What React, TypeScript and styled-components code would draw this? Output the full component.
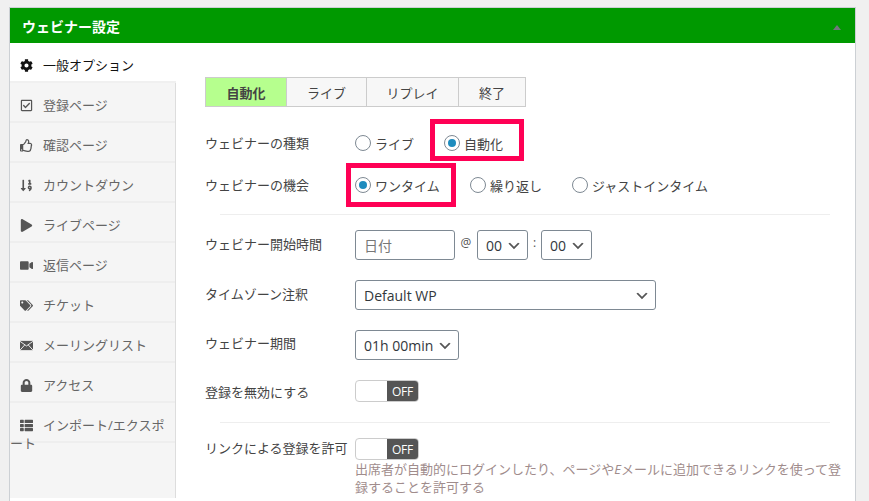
import React from 'react';
import styled, { createGlobalStyle } from 'styled-components';
import {
  FaCog,
  FaLock,
  FaPlay,
  FaRegCheckSquare,
  FaRegThumbsUp,
  FaSortNumericDown,
  FaTags,
  FaThList,
  FaVideo,
} from 'react-icons/fa';

const GlobalStyle = createGlobalStyle`
  html, body {
    margin: 0;
    height: 100%;
    overflow: hidden;
    background: #f0f0f0;
  }
  body {
    font-family: "Open Sans", "Noto Sans CJK JP", sans-serif;
    font-size: 13px;
    color: #444;
  }
`;

const Page = styled.div`
  padding: 7px 13px 0 9px;
  height: 501px;
  box-sizing: border-box;
  overflow: hidden;
`;

const Panel = styled.div`
  border: 1px solid #ccd0d4;
  background: #fff;
  height: 600px;
`;

const Header = styled.div`
  height: 35px;
  background: #009900;
  display: flex;
  align-items: center;
  justify-content: space-between;
  padding: 0 14px 0 12px;
`;

const Title = styled.h2`
  margin: 0;
  font-size: 14px;
  font-weight: 700;
  color: #fff;
`;

const CollapseArrow = styled.span`
  width: 0;
  height: 0;
  margin-top: 4px;
  border-left: 4px solid transparent;
  border-right: 4px solid transparent;
  border-bottom: 5px solid #72777c;
`;

const Body = styled.div`
  display: flex;
  align-items: flex-start;
`;

const Sidebar = styled.ul`
  list-style: none;
  box-sizing: border-box;
  margin: 0;
  padding: 0;
  width: 166px;
  height: 455px;
  flex: none;
  background: #f5f5f5;
  border-right: 1px solid #ddd;
`;

const SideItem = styled.li<{ $active?: boolean }>`
  box-sizing: border-box;
  height: 40px;
  padding: 13px 8px 0 0;
  line-height: 18px;
  border-bottom: 2px solid ${({ $active }) => ($active ? '#f0f0f0' : '#eee')};
  color: ${({ $active }) => ($active ? '#111' : '#666')};
  background: ${({ $active }) => ($active ? '#fff' : 'transparent')};
  margin-right: ${({ $active }) => ($active ? '-1px' : '0')};

  svg {
    width: 13px;
    height: 13px;
    margin: 0 10px;
    vertical-align: -2px;
    color: ${({ $active }) => ($active ? '#111' : '#555')};
  }
`;

const Main = styled.div`
  flex: 1;
  min-width: 0;
  padding: 34px 25px 0 29px;
`;

const Tabs = styled.div`
  display: flex;
  width: max-content;
  height: 30px;
  box-sizing: border-box;
  border: 1px solid #ccc;
  margin-bottom: 15px;
`;

const Tab = styled.div<{ $active?: boolean; $width: number }>`
  box-sizing: border-box;
  width: ${({ $width }) => $width}px;
  display: flex;
  align-items: center;
  justify-content: center;
  background: ${({ $active }) => ($active ? '#b6ff8e' : '#f7f7f7')};
  color: #444;
  font-weight: ${({ $active }) => ($active ? 600 : 400)};
  & + & {
    border-left: 1px solid #ccc;
  }
`;

const Row = styled.div<{ $height: number; $gap?: number }>`
  display: flex;
  align-items: center;
  height: ${({ $height }) => $height}px;
  margin-bottom: ${({ $gap }) => $gap ?? 0}px;
`;

const Label = styled.div<{ $lift?: number }>`
  width: 150px;
  flex: none;
  color: #444;
  padding-bottom: ${({ $lift }) => $lift ?? 0}px;
`;

const RadioGroup = styled.div`
  display: flex;
  align-items: center;
`;

const RadioItem = styled.label<{ $width: number }>`
  position: relative;
  display: flex;
  align-items: center;
  gap: 4px;
  width: ${({ $width }) => $width}px;
  color: #444;
`;

const RadioDot = styled.span<{ $checked?: boolean }>`
  box-sizing: border-box;
  width: 16px;
  height: 16px;
  flex: none;
  border-radius: 50%;
  border: 1px solid #7e8993;
  background: #fff;
  display: flex;
  align-items: center;
  justify-content: center;

  &::before {
    content: '';
    display: ${({ $checked }) => ($checked ? 'block' : 'none')};
    width: 8px;
    height: 8px;
    border-radius: 50%;
    background: #1e8cbe;
  }
`;

const Callout = styled.span<{ $left: number; $top: number; $width: number; $height: number }>`
  position: absolute;
  left: ${({ $left }) => $left}px;
  top: ${({ $top }) => $top}px;
  width: ${({ $width }) => $width}px;
  height: ${({ $height }) => $height}px;
  box-sizing: border-box;
  border: 5px solid #ff0055;
  pointer-events: none;
`;

const Divider = styled.div<{ $top: number; $bottom: number }>`
  height: 1px;
  background: #eee;
  margin: ${({ $top }) => $top}px 0 ${({ $bottom }) => $bottom}px 15px;
`;

const chevron =
  "url(\"data:image/svg+xml,%3Csvg xmlns='http://www.w3.org/2000/svg' width='20' height='20'%3E%3Cpath d='M5 6l5 5 5-5 2 1-7 7-7-7z' fill='%23555'/%3E%3C/svg%3E\")";

const Select = styled.div<{ $width: number }>`
  box-sizing: border-box;
  width: ${({ $width }) => $width}px;
  height: 30px;
  padding-left: 8px;
  display: flex;
  align-items: center;
  border: 1px solid #7e8993;
  border-radius: 3px;
  background: #fff ${chevron} no-repeat right 5px top 55%;
  background-size: 16px 16px;
  font-size: 14px;
  color: #32373c;
`;

const DateInput = styled.input`
  box-sizing: border-box;
  width: 100px;
  height: 30px;
  padding: 0 8px;
  border: 1px solid #7e8993;
  border-radius: 3px;
  font: inherit;
  font-size: 14px;
  color: #32373c;
  outline: none;

  &::placeholder {
    color: #777;
    opacity: 1;
  }
`;

const TimeSep = styled.span<{ $width: number }>`
  width: ${({ $width }) => $width}px;
  text-align: center;
  font-size: 12px;
  line-height: 1;
  margin-top: -4px;
  color: #555;
`;

const Toggle = styled.div`
  box-sizing: border-box;
  width: 64px;
  height: 22px;
  border: 1px solid #ccc;
  border-radius: 4px;
  overflow: hidden;
  display: flex;
  justify-content: flex-end;
  background: #fff;
`;

const ToggleOff = styled.span`
  width: 31px;
  background: #555;
  color: #fff;
  font-size: 12px;
  font-weight: 400;
  letter-spacing: -0.3px;
  display: flex;
  align-items: center;
  justify-content: center;
`;

const HelpRow = styled.div`
  display: flex;
  align-items: flex-start;
  height: 22px;
`;

const Help = styled.p`
  margin: 0 0 0 150px;
  font-size: 13px;
  line-height: 18px;
  color: #a08c8c;
  width: 492px;
`;

// dashicons-style envelope, the package one has no crossed flaps
const MailIcon = () => (
  <svg viewBox="0 0 14 14" aria-hidden="true">
    <path d="M0 2h14v10H0z" fill="currentColor" />
    <path d="M0 2.5l7 5 7-5M0 12l5-5.5M14 12L9 6.5" stroke="#f5f5f5" strokeWidth="1" fill="none" />
  </svg>
);

const sideItems: { icon: React.ReactNode; label: string; active?: boolean }[] = [
  { icon: <FaCog />, label: '一般オプション', active: true },
  { icon: <FaRegCheckSquare />, label: '登録ページ' },
  { icon: <FaRegThumbsUp />, label: '確認ページ' },
  { icon: <FaSortNumericDown />, label: 'カウントダウン' },
  { icon: <FaPlay />, label: 'ライブページ' },
  { icon: <FaVideo />, label: '返信ページ' },
  { icon: <FaTags />, label: 'チケット' },
  { icon: <MailIcon />, label: 'メーリングリスト' },
  { icon: <FaLock />, label: 'アクセス' },
  { icon: <FaThList />, label: 'インポート/エクスポート' },
];

const App: React.FC = () => (
  <Page>
    <GlobalStyle />
    <Panel>
      <Header>
        <Title>ウェビナー設定</Title>
        <CollapseArrow />
      </Header>
      <Body>
        <Sidebar>
          {sideItems.map((item) => (
            <SideItem $active={item.active} key={item.label}>
              {item.icon}
              {item.label}
            </SideItem>
          ))}
        </Sidebar>
        <Main>
          <Tabs>
            <Tab $active $width={80}>自動化</Tab>
            <Tab $width={80}>ライブ</Tab>
            <Tab $width={92}>リプレイ</Tab>
            <Tab $width={67}>終了</Tab>
          </Tabs>

          <Row $height={42}>
            <Label $lift={2}>ウェビナーの種類</Label>
            <RadioGroup>
              <RadioItem $width={89}>
                <RadioDot />
                ライブ
              </RadioItem>
              <RadioItem $width={60}>
                <RadioDot $checked />
                自動化
                <Callout $left={-14} $top={-15} $width={94} $height={42} />
              </RadioItem>
            </RadioGroup>
          </Row>
          <Row $height={42}>
            <Label $lift={2}>ウェビナーの機会</Label>
            <RadioGroup>
              <RadioItem $width={115}>
                <RadioDot $checked />
                ワンタイム
                <Callout $left={-9} $top={-13} $width={110} $height={44} />
              </RadioItem>
              <RadioItem $width={102}>
                <RadioDot />
                繰り返し
              </RadioItem>
              <RadioItem $width={140}>
                <RadioDot />
                ジャストインタイム
              </RadioItem>
            </RadioGroup>
          </Row>

          <Divider $top={8} $bottom={15} />

          <Row $height={30} $gap={20}>
            <Label $lift={4}>ウェビナー開始時間</Label>
            <DateInput placeholder="日付" />
            <TimeSep $width={22}>@</TimeSep>
            <Select $width={51}>00</Select>
            <TimeSep $width={13}>:</TimeSep>
            <Select $width={51}>00</Select>
          </Row>
          <Row $height={30} $gap={20}>
            <Label $lift={4}>タイムゾーン注釈</Label>
            <Select $width={301}>Default WP</Select>
          </Row>
          <Row $height={30} $gap={20}>
            <Label $lift={6}>ウェビナー期間</Label>
            <Select $width={104}>01h 00min</Select>
          </Row>
          <Row $height={22}>
            <Label>登録を無効にする</Label>
            <Toggle>
              <ToggleOff>OFF</ToggleOff>
            </Toggle>
          </Row>

          <Divider $top={20} $bottom={15} />

          <HelpRow>
            <Label>リンクによる登録を許可</Label>
            <Toggle>
              <ToggleOff>OFF</ToggleOff>
            </Toggle>
          </HelpRow>
          <Help>
            出席者が自動的にログインしたり、ページや<i>E</i>メールに追加できるリンクを使って登
            <br />
            録することを許可する
          </Help>
        </Main>
      </Body>
    </Panel>
  </Page>
);

export default App;
